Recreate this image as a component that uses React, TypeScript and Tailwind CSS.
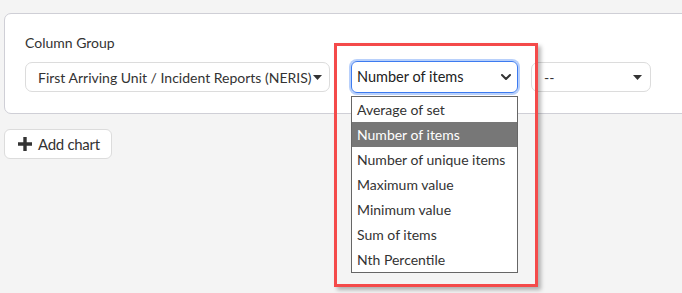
import { ChevronDown } from "lucide-react";

const options = [
    "Average of set",
    "Number of items",
    "Number of unique items",
    "Maximum value",
    "Minimum value",
    "Sum of items",
    "Nth Percentile",
];

function Caret() {
    return (
        <svg width="9" height="5" viewBox="0 0 9 5" className="shrink-0">
            <path d="M0 0 H9 L4.5 5 Z" fill="#333" />
        </svg>
    );
}

export default function App() {
    const selected = "Number of items";

    return (
        <div className="relative w-[682px] h-[293px] overflow-hidden bg-[#f4f4f4] text-[#333] font-['Lato',_sans-serif]">
            <div className="ml-[4px] mt-[13px] w-[700px] bg-white border border-[#cfcfd6] rounded-l-[7px] pl-[20px] pt-[19px] pb-[20px]">
                <p className="text-[14px] leading-[20px] mb-[8px]">Column Group</p>
                <div className="flex items-center">
                    <div className="w-[305px] h-[30px] flex items-center justify-between pl-[12px] pr-[7px] border border-[#dcdcdc] rounded-[7px] text-[14px] whitespace-nowrap">
                        <span>First Arriving Unit / Incident Reports (NERIS)</span>
                        <Caret />
                    </div>
                    <div className="relative ml-[21px]">
                        <div className="w-[167px] h-[32px] flex items-center justify-between pl-[5px] pr-[3px] border-[1.5px] border-[#3d7bf0] rounded-[6px] ring-2 ring-[#b8d0fb] text-[14.5px] text-[#222]">
                            <span>{selected}</span>
                            <ChevronDown size={16} strokeWidth={3} color="#333" />
                        </div>
                        <ul className="absolute left-0 top-[35px] w-[167px] bg-white border border-[#666] z-10">
                            {options.map((o) => (
                                <li
                                    key={o}
                                    className={`h-[25px] leading-[25px] pl-[5px] text-[14px] whitespace-nowrap ${o === selected ? "bg-[#777] text-white" : "text-[#333]"}`}
                                >
                                    {o}
                                </li>
                            ))}
                        </ul>
                    </div>
                    <div className="ml-[13px] w-[120px] h-[30px] flex items-center justify-between pl-[12px] pr-[8px] border border-[#dcdcdc] rounded-[7px] text-[14px]">
                        <span>--</span>
                        <Caret />
                    </div>
                </div>
            </div>
            <button className="ml-[4px] mt-[15px] h-[30px] flex items-center gap-[6px] pl-[13px] pr-[11px] bg-white border border-[#dcdcdc] rounded-[6px] text-[15px] tracking-[-0.3px] text-[#333]">
                <svg width="14" height="14" viewBox="0 0 14 14">
                    <path d="M5.3 0 H8.7 V5.3 H14 V8.7 H8.7 V14 H5.3 V8.7 H0 V5.3 H5.3 Z" fill="#333" />
                </svg>
                Add chart
            </button>
            <div className="absolute left-[334px] top-[43px] w-[204px] h-[244px] border-[3px] border-[#f44a4a] shadow-[3px_3px_4px_rgba(0,0,0,0.28)] pointer-events-none z-20" />
        </div>
    );
}
